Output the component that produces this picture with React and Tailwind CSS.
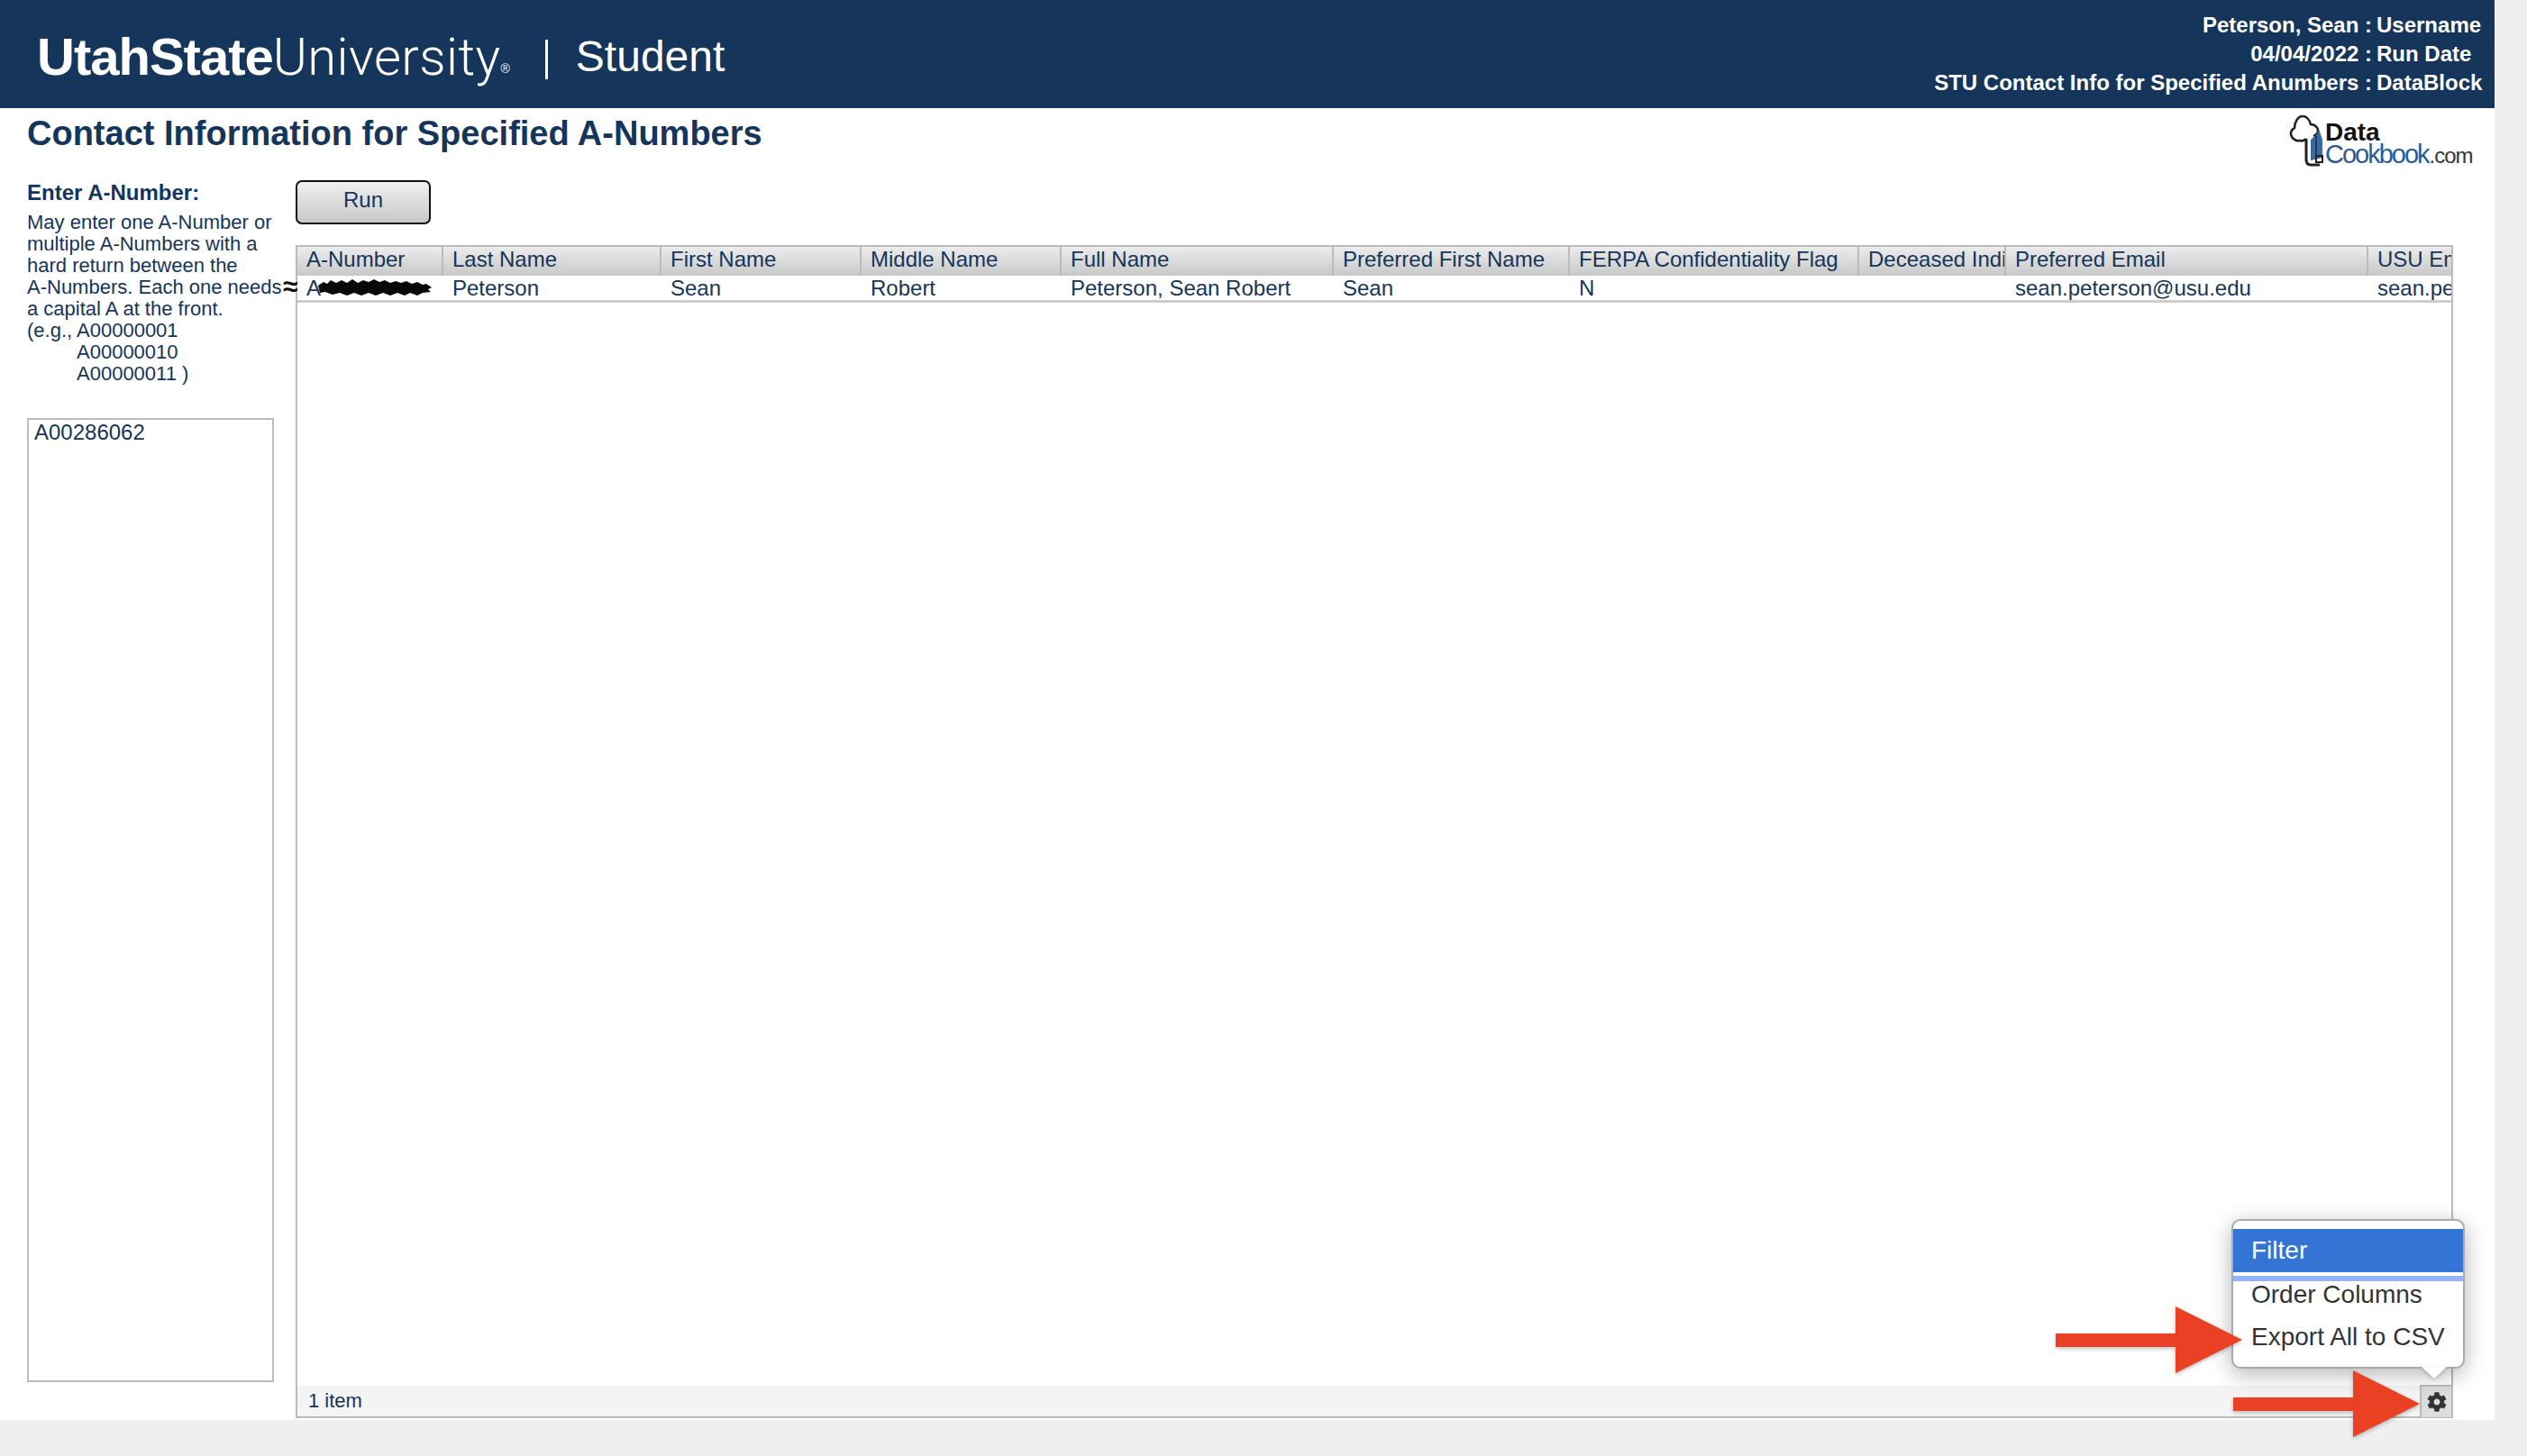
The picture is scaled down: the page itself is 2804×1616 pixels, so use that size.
import React from "react";
import { FaCog } from "react-icons/fa";

const columns = [
  { title: "A-Number", value: "A", width: "w-[162px]" },
  { title: "Last Name", value: "Peterson", width: "w-[242px]" },
  { title: "First Name", value: "Sean", width: "w-[222px]" },
  { title: "Middle Name", value: "Robert", width: "w-[222px]" },
  { title: "Full Name", value: "Peterson, Sean Robert", width: "w-[302px]" },
  { title: "Preferred First Name", value: "Sean", width: "w-[262px]" },
  { title: "FERPA Confidentiality Flag", value: "N", width: "w-[321px]" },
  { title: "Deceased Indicator", value: "", width: "w-[163px]" },
  { title: "Preferred Email", value: "sean.peterson@usu.edu", width: "w-[402px]" },
  { title: "USU Email", value: "sean.peterson@usu.edu", width: "w-[162px]" },
];

function DataCookbookLogo() {
  return (
    <div className="relative h-[58px] w-[204px] shrink-0">
      <svg viewBox="0 0 44 58" className="absolute left-0 top-0 h-[58px] w-[44px]" fill="none">
        <path d="M19 27c-2 2-4 3-7 2-3 1-7-1-9-4-2-4-1-8 3-10 0-5 3-13 9-13 5 0 8 5 9 9 4 0 8 3 8 7 0 3-2 5-5 6" stroke="#222" strokeWidth="2.6" />
        <path d="M19 27v23c0 4 2 6 5 6h10" stroke="#222" strokeWidth="3" />
        <path d="M24 28l7-6 2-6 4 12v20l-13 3z" fill="#3a689f" />
        <path d="M30 24v24" stroke="#1c3b66" strokeWidth="2" />
        <rect x="30" y="46" width="7" height="7" fill="none" stroke="#222" strokeWidth="2" />
      </svg>
      <span className="absolute left-[40px] top-[4px] text-[28px] leading-[32px] font-bold text-[#111]">
        Data
      </span>
      <span className="absolute left-[40px] top-[28px] text-[29px] leading-[32px] tracking-[-2px] text-[#2d5a94]">
        Cookbook<span className="ml-[1px] text-[24px] tracking-[-1px] text-[#333]">.com</span>
      </span>
    </div>
  );
}

function Scribble() {
  return (
    <svg viewBox="0 0 126 18" className="absolute left-[23px] top-[4px] h-[18px] w-[126px]">
      <path
        d="M0 7L6 3L10 5L14 1L20 4L26 1L32 4L38 0L44 4L50 1L56 3L62 0L68 3L74 1L80 4L86 2L92 4L98 2L104 5L110 3L116 6L120 5L126 9L122 11L125 14L116 15L110 18L102 15L96 18L88 15L80 18L72 15L64 18L56 15L48 18L40 15L32 18L24 15L16 17L8 14L2 15Z"
        fill="#080808"
      />
    </svg>
  );
}

function Arrow({ className }) {
  return (
    <svg viewBox="0 0 207 74" className={`absolute h-[74px] w-[207px] drop-shadow-[0_2px_2px_rgba(0,0,0,0.25)] ${className}`}>
      <path d="M0 30h133V0l74 37-74 37V45H0z" fill="#ea4125" />
    </svg>
  );
}

function ActionMenu() {
  return (
    <div className="absolute left-[2476px] top-[1353px] w-[259px]">
      <div className="rounded-[10px] border-2 border-[#aaaaaa] bg-white py-[9px] shadow-[0_6px_24px_rgba(0,0,0,0.3)]">
        <div className="flex h-12 items-center bg-[#3474d4] pl-[20px] text-[28px] text-white">Filter</div>
        <div className="mt-1 h-[6px] bg-[#94b3f4]" />
        <div className="flex h-[38px] items-start pl-[20px] text-[28px] leading-[30px] text-[#333333]">Order Columns</div>
        <div className="flex h-12 items-center pl-[20px] text-[28px] text-[#333333]">Export All to CSV</div>
      </div>
      <div className="absolute left-[211px] top-[164px] h-0 w-0 border-x-[14px] border-t-[13px] border-x-transparent border-t-white drop-shadow-[0_2px_2px_rgba(0,0,0,0.2)]" />
    </div>
  );
}

function ResultsGrid() {
  return (
    <div className="relative mt-[23px] flex h-[1302px] w-[2394px] flex-col border-2 border-[#bbbbbb] bg-white">
      <div className="flex-1 overflow-hidden">
        <div className="flex h-[32px] w-max bg-gradient-to-b from-[#ececec] to-[#c8c8c8]">
          {columns.map((c) => (
            <div
              key={c.title}
              className={`${c.width} overflow-hidden whitespace-nowrap border-r-2 border-[#bbbbbb] pl-[10px] text-[24px] leading-[28px] last:border-r-0`}
            >
              {c.title}
            </div>
          ))}
        </div>
        <div className="flex h-[30px] w-full overflow-hidden border-b-[3px] border-[#cccccc]">
          {columns.map((c, i) => (
            <div key={c.title} className={`${c.width} relative shrink-0 whitespace-nowrap pl-[10px] text-[24px] leading-[27px] ${i === 0 ? "" : "overflow-hidden"}`}>
              {c.value}
              {i === 0 && <Scribble />}
            </div>
          ))}
        </div>
      </div>
      <div className="flex h-[34px] items-center justify-between bg-[#f4f4f4]">
        <span className="-translate-y-[1px] pl-3 text-[22px]">1 item</span>
        <button className="flex h-[36px] w-[35px] items-center justify-center border-l-2 border-t-2 border-[#bbbbbb] bg-[#dddddd] text-[#333333]">
          <FaCog className="h-[22px] w-[22px]" />
        </button>
      </div>
    </div>
  );
}

export default function App() {
  return (
    <div className="relative h-[1616px] w-[2804px] overflow-hidden bg-[#efefef] font-['Liberation_Sans',Arial,sans-serif] text-[#15355a]">
      <div className="h-[1576px] w-[2768px] bg-white">
        <header className="flex h-[120px] items-start justify-between bg-[#15355a] text-white">
          <div className="flex items-center pl-[41px] pt-[31px]">
            <span className="text-[58px] font-bold leading-[64px] tracking-[-1px]">UtahState</span>
            <span className="text-[58px] font-light leading-[64px] tracking-[0.4px] font-['Roboto',sans-serif]">University</span>
            <span className="mt-[26px] text-[14px]">®</span>
            <span className="ml-[39px] mt-[6px] h-[44px] w-[3px] bg-white" />
            <span className="ml-[31px] text-[48px] leading-[64px]">Student</span>
          </div>
          <div className="grid grid-cols-[auto_117px] gap-x-[5px] pr-[14px] pt-[12px] text-[24px] font-bold leading-[32px]">
            <span className="text-right">Peterson, Sean :</span>
            <span>Username</span>
            <span className="text-right">04/04/2022 :</span>
            <span>Run Date</span>
            <span className="text-right">STU Contact Info for Specified Anumbers :</span>
            <span>DataBlock</span>
          </div>
        </header>

        <div className="flex items-start justify-between pl-[30px] pr-[24px]">
          <h1 className="pt-[6px] text-[38px] font-bold leading-[44px]">Contact Information for Specified A-Numbers</h1>
          <div className="pt-[7px]">
            <DataCookbookLogo />
          </div>
        </div>

        <div className="mt-[15px] flex pl-[30px]">
          <aside className="w-[298px] shrink-0">
            <div className="text-[24px] font-bold leading-[28px]">Enter A-Number:</div>
            <div className="mt-[7px] whitespace-nowrap text-[22px] leading-[24px]">
              <div>May enter one A-Number or</div>
              <div>multiple A-Numbers with a</div>
              <div>hard return between the</div>
              <div>A-Numbers. Each one needs</div>
              <div>a capital A at the front.</div>
              <div>(e.g., A00000001</div>
              <div className="pl-[55px]">A00000010</div>
              <div className="pl-[55px]">A00000011 )</div>
            </div>
            <textarea
              readOnly
              defaultValue="A00286062"
              className="mt-[37px] block h-[1070px] w-[274px] resize-none border-2 border-[#bbbbbb] bg-white px-[6px] text-[24px] leading-[28px] outline-none"
            />
          </aside>
          <main className="min-w-0">
            <button className="h-[49px] w-[150px] rounded-[7px] border-2 border-[#111111] bg-gradient-to-b from-[#f0f0f0] to-[#c8c8c8] text-[24px] leading-[36px]">
              <span className="block -translate-y-[3px]">Run</span>
            </button>
            <ResultsGrid />
          </main>
        </div>
      </div>

      <span className="absolute left-[314px] top-[302px] text-[30px] font-bold leading-[32px] text-[#111111]">≈</span>
      <ActionMenu />
      <Arrow className="left-[2281px] top-[1450px]" />
      <Arrow className="left-[2478px] top-[1521px]" />
    </div>
  );
}
